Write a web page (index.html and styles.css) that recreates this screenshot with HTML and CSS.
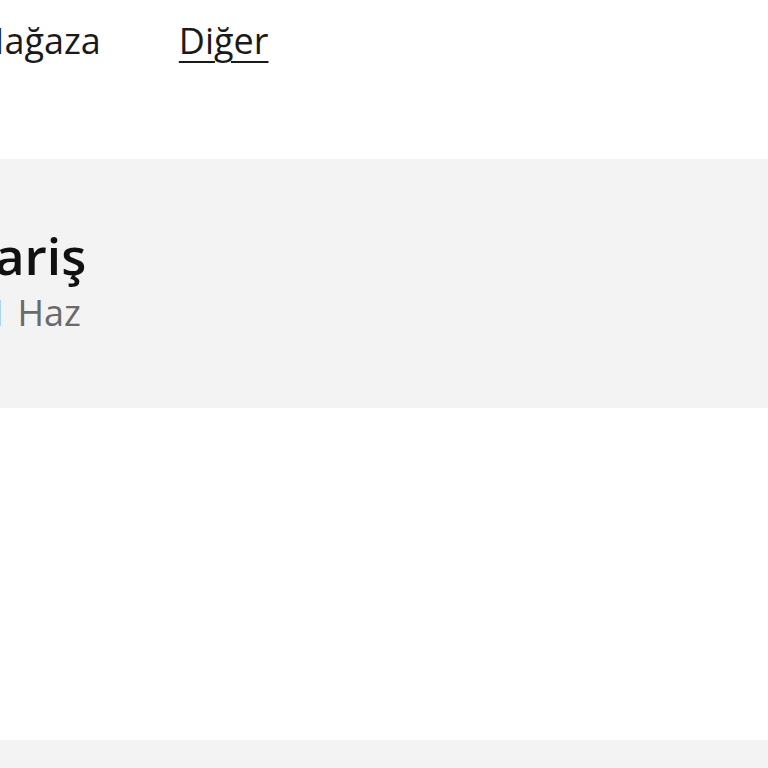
FILE: index.html
```html
<!DOCTYPE html>
<html lang="tr">

<head>
    <meta charset="UTF-8">
    <meta name="viewport" content="width=device-width, initial-scale=1.0">
    <title>Diğer</title>
    <link rel="stylesheet" href="styles.css">
</head>

<body>
    <div class="page">
        <ul class="nav">
            <li><a href="#">Mağaza</a></li>
            <li><a href="#" class="active">Diğer</a></li>
        </ul>

        <div class="hero">
            <div class="hero-text">
                <div class="title">Sipariş</div>
                <div class="sub">Sal, 1 Haz</div>
            </div>
        </div>

        <div class="list"></div>
    </div>
</body>

</html>
```

FILE: styles.css
```css
html,
body {
    margin: 0px;
    width: 100%;
    height: 100%;
}

body {
    font-family: "Open Sans", "Noto Sans", sans-serif;
    color: #1a1a1a;
    background: #fff;
    overflow: hidden;
}

.page {
    width: 100%;
    height: 100%;
    display: flex;
    flex-direction: column;
}

.nav {
    list-style: none;
    margin: 0px 0px 0px -28px;
    padding: 17px 0px 0px;
    display: flex;
    gap: 78px;
    font-size: 36px;
    line-height: 48px;
}

.nav a {
    color: #1a1a1a;
    text-decoration: none;
}

.nav a.active {
    text-decoration: underline;
    text-decoration-thickness: 2px;
    text-underline-offset: 7px;
}

.hero {
    margin-top: 94px;
    height: 249px;
    background: #f3f3f3;
    padding-top: 66px;
    box-sizing: border-box;
}

.hero-text {
    margin-left: -80px;
    display: flex;
    flex-direction: column;
    gap: 4px;
}

.title {
    font-size: 51.5px;
    font-weight: 600;
    line-height: 60px;
    color: #111;
}

.sub {
    font-size: 36px;
    line-height: 48px;
    color: #6a6a6a;
}

.list {
    margin-top: 332px;
    flex: 1;
    background: #f3f3f3;
}
```
